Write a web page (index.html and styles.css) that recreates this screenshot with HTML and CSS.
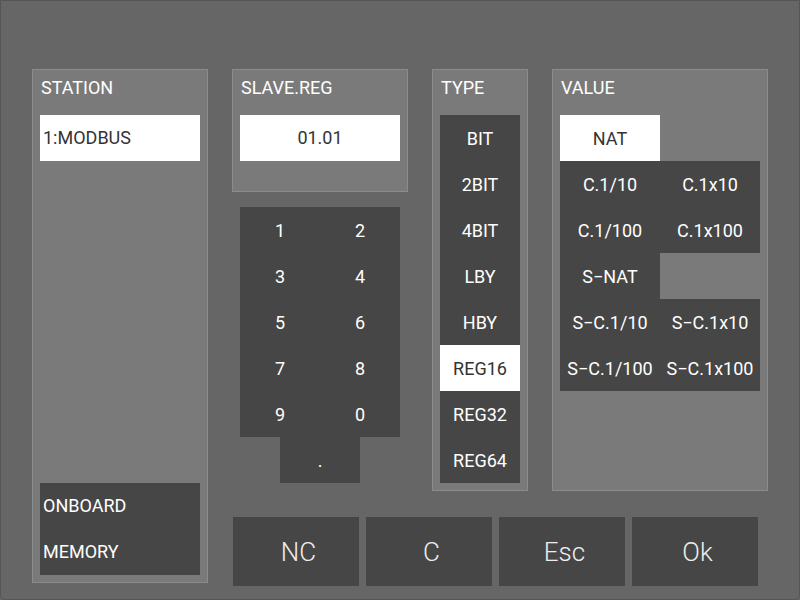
FILE: index.html
```html
<!DOCTYPE html>
<html lang="en">
<head>
<meta charset="UTF-8">
<meta name="viewport" content="width=device-width, initial-scale=1.0">
<title>Variable select</title>
<link rel="stylesheet" href="styles.css">
</head>
<body>
<div class="frame">
  <div class="layout">
    <section class="panel station">
      <div class="panel-title">STATION</div>
      <div class="field field-left">1:MODBUS</div>
      <div class="memory">
        <div class="memory-row">ONBOARD</div>
        <div class="memory-row">MEMORY</div>
      </div>
    </section>

    <div class="column-slave">
      <section class="panel slave">
        <div class="panel-title">SLAVE.REG</div>
        <div class="field">01.01</div>
      </section>
      <div class="keypad">
        <div class="keys">
          <button class="key">1</button>
          <button class="key">2</button>
          <button class="key">3</button>
          <button class="key">4</button>
          <button class="key">5</button>
          <button class="key">6</button>
          <button class="key">7</button>
          <button class="key">8</button>
          <button class="key">9</button>
          <button class="key">0</button>
        </div>
        <button class="key key-dot">.</button>
      </div>
    </div>

    <section class="panel type">
      <div class="panel-title">TYPE</div>
      <div class="type-list">
        <button class="opt">BIT</button>
        <button class="opt">2BIT</button>
        <button class="opt">4BIT</button>
        <button class="opt">LBY</button>
        <button class="opt">HBY</button>
        <button class="opt selected">REG16</button>
        <button class="opt">REG32</button>
        <button class="opt">REG64</button>
      </div>
    </section>

    <section class="panel value">
      <div class="panel-title">VALUE</div>
      <div class="value-grid">
        <button class="opt selected">NAT</button>
        <div class="blank"></div>
        <button class="opt">C.1/10</button>
        <button class="opt">C.1x10</button>
        <button class="opt">C.1/100</button>
        <button class="opt">C.1x100</button>
        <button class="opt">S&minus;NAT</button>
        <div class="blank"></div>
        <button class="opt">S&minus;C.1/10</button>
        <button class="opt">S&minus;C.1x10</button>
        <button class="opt">S&minus;C.1/100</button>
        <button class="opt">S&minus;C.1x100</button>
      </div>
    </section>

    <div class="actions">
      <button class="action">NC</button>
      <button class="action">C</button>
      <button class="action">Esc</button>
      <button class="action">Ok</button>
    </div>
  </div>
</div>
</body>
</html>
```

FILE: styles.css
```css
html, body {
  margin: 0;
  padding: 0;
  background-color: #666;
  font-family: 'Roboto', 'Liberation Sans', sans-serif;
  color: #fff;
}

button {
  font-family: inherit;
  border: none;
  margin: 0;
  padding: 0;
  cursor: pointer;
}

.frame {
  box-sizing: border-box;
  width: 800px;
  height: 600px;
  padding: 68px 0 0 31px;
  background-color: #666;
  border: 1px solid #555;
  border-radius: 0 0 5px 5px;
}

.layout {
  display: grid;
  grid-template-columns: 176px 176px 96px 216px;
  grid-template-rows: 422px 69px;
  column-gap: 24px;
  row-gap: 26px;
}

.panel {
  box-sizing: border-box;
  background-color: #7a7a7a;
  border: 1px solid #8c8c8c;
  padding: 0 7px 7px;
}

.panel-title {
  height: 45px;
  line-height: 36px;
  font-size: 18px;
  padding-left: 1px;
  color: #fff;
}

.field {
  height: 46px;
  line-height: 46px;
  background-color: #fff;
  color: #333;
  font-size: 18px;
  text-align: center;
}

.field-left {
  text-align: left;
  padding-left: 3px;
}

/* station column */
.station {
  grid-row: 1 / 3;
  height: 514px;
  display: flex;
  flex-direction: column;
}

.memory {
  margin-top: auto;
  background-color: #464646;
}

.memory-row {
  height: 46px;
  line-height: 46px;
  font-size: 18px;
  padding-left: 3px;
}

/* slave + keypad */
.column-slave {
  display: flex;
  flex-direction: column;
}

.slave {
  height: 123px;
}

.keypad {
  margin: 15px 8px 0;
  display: flex;
  flex-direction: column;
  align-items: center;
}

.keys {
  display: grid;
  grid-template-columns: 80px 80px;
  grid-auto-rows: 46px;
}

.key {
  background-color: #464646;
  color: #fff;
  font-size: 18px;
}

.key-dot {
  width: 80px;
  height: 46px;
}

/* type + value */
.opt {
  height: 46px;
  background-color: #464646;
  color: #fff;
  font-size: 18px;
}

.opt.selected {
  background-color: #fff;
  color: #333;
}

.type-list {
  display: flex;
  flex-direction: column;
}

.value-grid {
  display: grid;
  grid-template-columns: 100px 100px;
  grid-auto-rows: 46px;
}

.blank {
  background-color: transparent;
}

/* bottom buttons */
.actions {
  grid-column: 2 / 5;
  grid-row: 2;
  display: flex;
  gap: 7px;
  margin-left: 1px;
}

.action {
  width: 126px;
  height: 69px;
  padding-left: 5px;
  background-color: #464646;
  color: #eee;
  font-size: 26px;
  font-weight: 300;
}
```
